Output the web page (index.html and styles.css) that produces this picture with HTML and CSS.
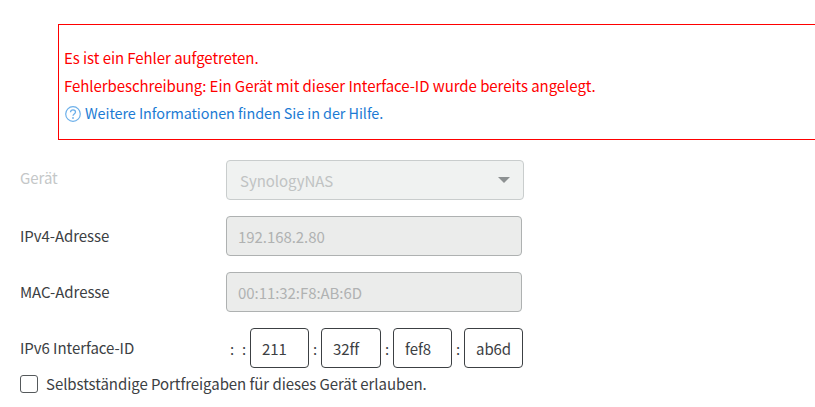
FILE: index.html
```html
<!DOCTYPE html>
<html lang="de">

<head>
    <meta charset="UTF-8">
    <meta name="viewport" content="width=device-width, initial-scale=1.0">
    <link rel="stylesheet" href="styles.css">
    <title>Gerät bearbeiten</title>
</head>

<body>
    <div class="errorBox">
        <p>Es ist ein Fehler aufgetreten.</p>
        <p>Fehlerbeschreibung: Ein Gerät mit dieser Interface-ID wurde bereits angelegt.</p>
        <p class="helpLine">
            <svg class="helpIcon" width="16" height="16" viewBox="0 0 16 16" fill="none">
                <circle cx="8" cy="8" r="7.3" stroke="#6db0ea" stroke-width="1.2" />
                <path d="M5.5 6.2c0-1.5 1.1-2.4 2.5-2.4s2.5.9 2.5 2.2c0 2-2.5 2-2.5 3.8" stroke="#6db0ea" stroke-width="1.3" />
                <circle cx="8" cy="12" r=".9" fill="#6db0ea" />
            </svg>
            <a href="#">Weitere Informationen finden Sie in der Hilfe.</a>
        </p>
    </div>

    <form>
        <div class="row">
            <label class="disabledLabel">Gerät</label>
            <div class="selectBox">
                <span>SynologyNAS</span>
                <span class="arrow"></span>
            </div>
        </div>
        <div class="row">
            <label>IPv4-Adresse</label>
            <input class="readOnly" type="text" value="192.168.2.80" disabled>
        </div>
        <div class="row">
            <label>MAC-Adresse</label>
            <input class="readOnly" type="text" value="00:11:32:F8:AB:6D" disabled>
        </div>
        <div class="row">
            <label>IPv6 Interface-ID</label>
            <div class="ipv6">
                <span class="sep">:</span>
                <span class="sep">:</span>
                <input class="part" type="text" value="211">
                <span class="sep">:</span>
                <input class="part wide" type="text" value="32ff">
                <span class="sep">:</span>
                <input class="part" type="text" value="fef8">
                <span class="sep">:</span>
                <input class="part" type="text" value="ab6d">
            </div>
        </div>
        <div class="checkRow">
            <input type="checkbox" id="portfreigabe">
            <label for="portfreigabe">Selbstständige Portfreigaben für dieses Gerät erlauben.</label>
        </div>
    </form>
</body>

</html>
```

FILE: styles.css
```css
body {
    margin: 0;
    background-color: #fff;
    color: #3c4043;
    font-family: "Noto Sans CJK SC", "Noto Sans", sans-serif;
    font-size: 15px;
    letter-spacing: -0.06px;
}

.errorBox {
    height: 95px;
    margin: 24px 0 0 58px;
    padding: 19px 0 0 5px;
    border: 1px solid #ff0000;
    border-right: none;
    color: #ff0000;
}

.errorBox p {
    margin: 0;
    height: 28px;
    line-height: 28px;
    white-space: nowrap;
}

.errorBox .helpLine {
    display: flex;
    align-items: center;
    gap: 4px;
    margin-top: -1px;
}

.helpIcon {
    margin-left: 1px;
    margin-top: 1px;
}

.helpLine a {
    color: #1c7bd4;
    font-size: 14.4px;
    text-decoration: none;
}

form {
    margin: 20px 0 0 20px;
}

.row {
    display: flex;
    align-items: center;
    height: 40px;
    margin-bottom: 16px;
}

.row label {
    width: 206px;
    flex: none;
    margin-top: -2px;
}

.row .disabledLabel {
    margin-top: -6px;
    color: #c4c7c8;
}

.selectBox {
    width: 298px;
    height: 40px;
    box-sizing: border-box;
    padding: 0 13px;
    display: flex;
    align-items: center;
    justify-content: space-between;
    border: 1px solid #c9cdcd;
    border-radius: 4px;
    background: #f0f2f1;
    color: #c0c3c3;
}

.arrow {
    width: 0;
    height: 0;
    border-left: 6px solid transparent;
    border-right: 6px solid transparent;
    border-top: 6px solid #8d9192;
}

input {
    font: inherit;
    letter-spacing: inherit;
}

.readOnly {
    width: 296px;
    height: 40px;
    box-sizing: border-box;
    padding: 0 11px;
    border: 1px solid #aeb1b1;
    border-radius: 4px;
    background: #ebeceb;
    color: #b0b2b2;
}

.ipv6 {
    display: flex;
    align-items: center;
}

.sep {
    width: 12px;
    text-align: center;
}

.part {
    width: 59px;
    height: 40px;
    box-sizing: border-box;
    padding: 0 0 0 11px;
    border: 1px solid #3c4043;
    border-radius: 4px;
    color: #3c4043;
}

.part.wide {
    width: 60px;
}

.checkRow {
    display: flex;
    align-items: center;
    gap: 8px;
    margin-top: -11px;
}

.checkRow input {
    appearance: none;
    width: 18px;
    height: 18px;
    margin: 0;
    border: 1px solid #55595b;
    border-radius: 3px;
    background: #fff;
}
```
